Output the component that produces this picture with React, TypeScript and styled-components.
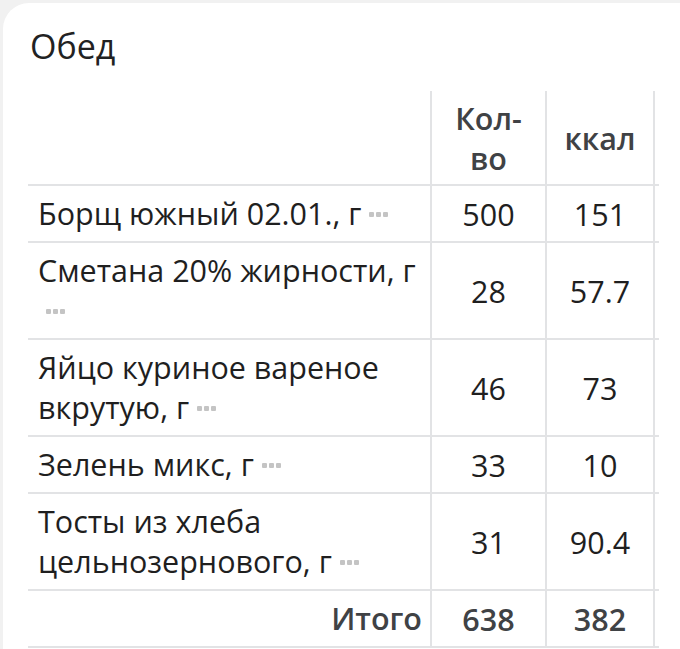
import styled, { createGlobalStyle } from "styled-components";

const GlobalStyle = createGlobalStyle`
    html, body {
        margin: 0;
        padding: 0;
        background-color: #f1f1f1;
        overflow: hidden;
    }

    body {
        font-family: "Open Sans", "Noto Sans", sans-serif;
        color: #222;
    }
`;

const Card = styled.div`
    margin: 3px 0 0 3px;
    width: 700px;
    min-height: 660px;
    background-color: #fff;
    border-radius: 26px 0 0 0;
    padding: 20px 0 0 25px;
    box-sizing: border-box;
`;

const Title = styled.h3`
    margin: 0 0 22px 2px;
    font-size: 34px;
    line-height: 46px;
    font-weight: 400;
    color: #222;
`;

const Table = styled.div`
    width: 631px;
    display: flex;
    flex-direction: column;
`;

const Row = styled.div<{ $head?: boolean }>`
    display: grid;
    grid-template-columns: 402px 115px 110px;
    border-bottom: 2px solid #e2e3e5;
    font-size: 30.5px;
    line-height: 40px;
    font-weight: ${({ $head }) => ($head ? 600 : 400)};
    color: ${({ $head }) => ($head ? "#404245" : "#1f1f1f")};
`;

const NameCell = styled.div<{ $total?: boolean }>`
    padding: 7px 8px 8px 10px;
    text-align: ${({ $total }) => ($total ? "right" : "left")};
    font-weight: ${({ $total }) => ($total ? 600 : 400)};
    color: ${({ $total }) => ($total ? "#404245" : "inherit")};
`;

const NumCell = styled.div<{ $last?: boolean; $total?: boolean }>`
    display: flex;
    align-items: center;
    justify-content: center;
    text-align: center;
    padding: 7px 8px 8px 8px;
    border-left: 2px solid #e2e3e5;
    border-right: ${({ $last }) => ($last ? "2px solid #e2e3e5" : "none")};
    margin-bottom: -2px;
    font-weight: ${({ $total }) => ($total ? 600 : "inherit")};
    color: ${({ $total }) => ($total ? "#404245" : "inherit")};
`;

const HeadLabel = styled.span`
    max-width: 72px;
`;

const More = styled.svg`
    display: inline-block;
    width: 20px;
    height: 6px;
    margin-left: 8px;
    vertical-align: 7px;
`;

const MoreIcon = () => (
    <More viewBox="0 0 20 6">
        <rect x="0" y="0" width="5" height="5" rx="1" fill="#c4c4c4" />
        <rect x="7" y="0" width="5" height="5" rx="1" fill="#c4c4c4" />
        <rect x="14" y="0" width="5" height="5" rx="1" fill="#c4c4c4" />
    </More>
);

type Item = { name: string; qty: string; kcal: string };

const items: Item[] = [
    { name: "Борщ южный 02.01., г", qty: "500", kcal: "151" },
    { name: "Сметана 20% жирности, г", qty: "28", kcal: "57.7" },
    { name: "Яйцо куриное вареное вкрутую, г", qty: "46", kcal: "73" },
    { name: "Зелень микс, г", qty: "33", kcal: "10" },
    { name: "Тосты из хлеба цельнозернового, г", qty: "31", kcal: "90.4" },
];

export default function App() {
    return (
        <>
            <GlobalStyle />
            <Card>
                <Title>Обед</Title>
                <Table>
                    <Row $head>
                        <NameCell />
                        <NumCell>
                            <HeadLabel>Кол-во</HeadLabel>
                        </NumCell>
                        <NumCell $last>ккал</NumCell>
                    </Row>
                    {items.map((item) => (
                        <Row key={item.name}>
                            <NameCell>
                                {item.name}
                                <MoreIcon />
                            </NameCell>
                            <NumCell>{item.qty}</NumCell>
                            <NumCell $last>{item.kcal}</NumCell>
                        </Row>
                    ))}
                    <Row>
                        <NameCell $total>Итого</NameCell>
                        <NumCell $total>638</NumCell>
                        <NumCell $last $total>382</NumCell>
                    </Row>
                </Table>
            </Card>
        </>
    );
}
